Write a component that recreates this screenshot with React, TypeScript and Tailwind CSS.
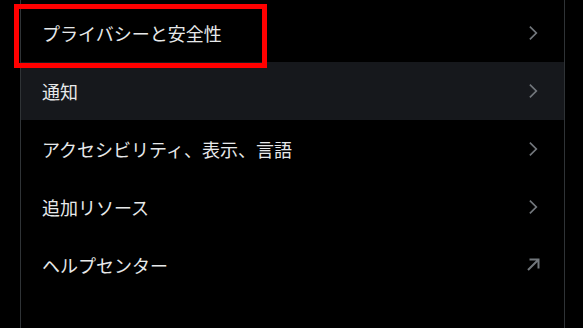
import React from "react";

const Chevron = () => (
  <svg viewBox="0 0 24 24" width="20" height="20" fill="#71767b" aria-hidden="true">
    <path d="M14.586 12L7.543 4.96l1.414-1.42L17.414 12l-8.457 8.46-1.414-1.42L14.586 12z" />
  </svg>
);

const Arrow = () => (
  <svg viewBox="0 0 24 24" width="24" height="24" fill="#71767b" aria-hidden="true" className="-mr-[2px]">
    <path d="M18.5 5.5v10h-2V8.91l-8.8 8.8-1.41-1.41 8.8-8.8H8.5v-2h10z" />
  </svg>
);

const items: { label: string; ext?: boolean; hover?: boolean }[] = [
  { label: "プライバシーと安全性" },
  { label: "通知", hover: true },
  { label: "アクセシビリティ、表示、言語" },
  { label: "追加リソース" },
  { label: "ヘルプセンター", ext: true },
];

export default function App() {
  return (
    <div
      className="relative w-[583px] h-[328px] overflow-hidden bg-black"
      style={{ fontFamily: '"Noto Sans CJK JP", "Noto Sans", sans-serif' }}
    >
      <div className="ml-[20px] w-[545px] h-full border-x border-[#2f3336] pt-[4px]">
        {items.map((it) => (
          <div
            key={it.label}
            className={`flex h-[58px] items-center justify-between pl-[21px] pr-[21px] ${
              it.hover ? "bg-[#16181c]" : ""
            }`}
          >
            <span className="text-[18px] leading-[20px] text-[#e7e9ea]">{it.label}</span>
            {it.ext ? <Arrow /> : <Chevron />}
          </div>
        ))}
      </div>
      <div className="absolute left-[14px] top-[4px] w-[253px] h-[64px] border-[5px] border-[#ff0000]" />
    </div>
  );
}
